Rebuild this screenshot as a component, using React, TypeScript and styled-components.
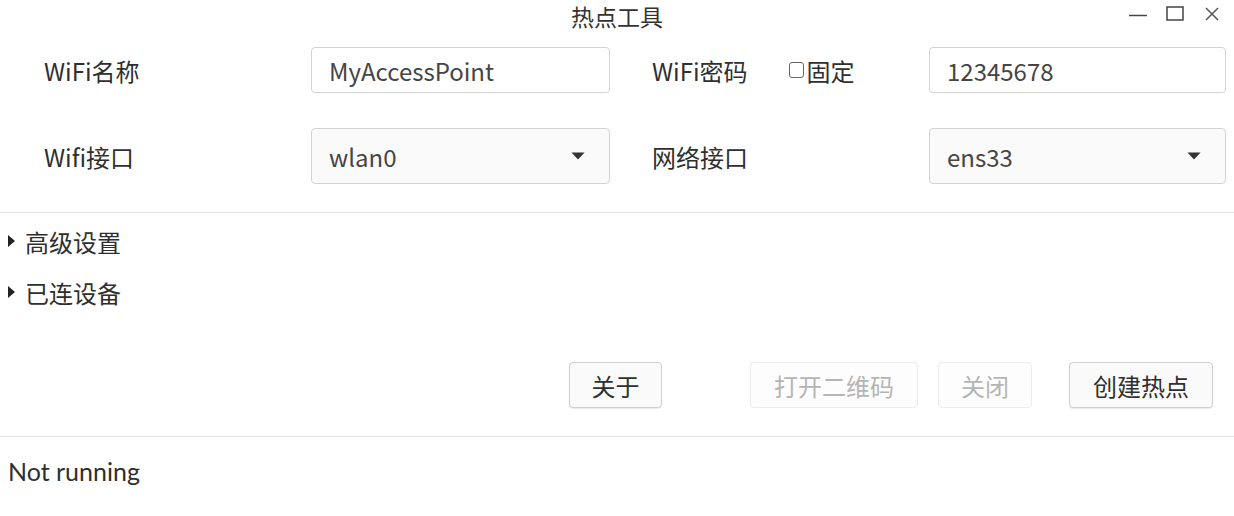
import React from "react";
import styled, { createGlobalStyle } from "styled-components";

const Global = createGlobalStyle`
  html, body { margin: 0; padding: 0; background: #ffffff; }
  body { font-family: "Noto Sans CJK SC", "Noto Sans", sans-serif; color: #333333; }
`;

const Window = styled.div`
  width: 1234px;
  height: 516px;
  display: flex;
  flex-direction: column;
  background: #ffffff;
  overflow: hidden;
`;

const TitleBar = styled.div`
  height: 33px;
  display: grid;
  grid-template-columns: 1fr auto 1fr;
  align-items: start;
`;

const Title = styled.div`
  font-size: 23px;
  line-height: 33px;
  color: #333;
  grid-column: 2;
`;

const Controls = styled.div`
  grid-column: 3;
  justify-self: end;
  display: flex;
  align-items: center;
  padding-right: 4px;
`;

const CtrlBtn = styled.div`
  width: 37px;
  height: 28px;
  display: flex;
  align-items: center;
  justify-content: center;
`;

const Form = styled.div`
  display: grid;
  grid-template-columns: 267px 299px 319px 297px;
  grid-template-rows: 46px 56px;
  row-gap: 35px;
  padding: 14px 0 28px 44px;
  align-items: center;
`;

const Label = styled.div<{ $indent?: number }>`
  font-size: 24px;
  color: #2f2f2f;
  padding-left: ${(p) => p.$indent ?? 0}px;
  display: flex;
  align-items: center;
  white-space: nowrap;
`;

const TextInput = styled.div`
  height: 46px;
  box-sizing: border-box;
  border: 1px solid #d3d3d3;
  border-radius: 4px;
  background: #fff;
  display: flex;
  align-items: center;
  padding-left: 17px;
  font-size: 24px;
  color: #454545;
`;

const Combo = styled(TextInput)`
  height: 56px;
  background: #fafafa;
  justify-content: space-between;
  padding-right: 24px;
`;

const Check = styled.span`
  display: inline-block;
  width: 13px;
  height: 14px;
  border: 1px solid #666;
  border-radius: 3px;
  margin-left: 41px;
  margin-right: 3px;
`;

const Divider = styled.div`
  height: 1px;
  background: #e4e4e4;
`;

const Sections = styled.div`
  display: flex;
  flex-direction: column;
  padding: 13px 0 0 8px;
  gap: 21px;
`;

const Expander = styled.div`
  display: flex;
  align-items: center;
  font-size: 24px;
  height: 30px;
  color: #2f2f2f;
`;

const Arrow = styled.span`
  width: 0;
  height: 0;
  border-top: 6px solid transparent;
  border-bottom: 6px solid transparent;
  border-left: 7px solid #222;
  margin-right: 10px;
`;

const ButtonRow = styled.div`
  display: flex;
  align-items: center;
  height: 46px;
  margin-top: 55px;
  margin-bottom: 28px;
  padding-left: 569px;
`;

const Button = styled.div<{ $disabled?: boolean; $w: number; $ml?: number }>`
  width: ${(p) => p.$w}px;
  height: 46px;
  box-sizing: border-box;
  margin-left: ${(p) => p.$ml ?? 0}px;
  border: 1px solid ${(p) => (p.$disabled ? "#ececec" : "#d0d0d0")};
  border-radius: 4px;
  background: ${(p) => (p.$disabled ? "#fdfdfd" : "#fafafa")};
  color: ${(p) => (p.$disabled ? "#b5b5b5" : "#2f2f2f")};
  font-size: 24px;
  display: flex;
  align-items: center;
  justify-content: center;
  box-shadow: ${(p) => (p.$disabled ? "none" : "0 1px 1px rgba(0,0,0,0.08)")};
`;

const Status = styled.div`
  font-family: Lato, "Noto Sans", sans-serif;
  font-size: 25px;
  color: #2f2f2f;
  padding: 19px 0 0 8px;
`;

const Caret = () => (
  <svg width="14" height="8" viewBox="0 0 14 8">
    <path d="M0.5 0.5 L13.5 0.5 L7 7.5 Z" fill="#333" />
  </svg>
);

export default function App() {
  return (
    <Window>
      <Global />
      <TitleBar>
        <Title>热点工具</Title>
        <Controls>
          <CtrlBtn>
            <svg width="20" height="20" viewBox="0 0 20 20">
              <path d="M1 11.5 H19" stroke="#444" strokeWidth="1.5" />
            </svg>
          </CtrlBtn>
          <CtrlBtn>
            <svg width="20" height="20" viewBox="0 0 20 20">
              <rect x="2" y="3" width="16" height="13" fill="none" stroke="#444" strokeWidth="1.5" />
            </svg>
          </CtrlBtn>
          <CtrlBtn>
            <svg width="20" height="20" viewBox="0 0 20 20">
              <path d="M4 4 L16 16 M16 4 L4 16" stroke="#555" strokeWidth="1.5" />
            </svg>
          </CtrlBtn>
        </Controls>
      </TitleBar>
      <Form>
        <Label>WiFi名称</Label>
        <TextInput>MyAccessPoint</TextInput>
        <Label $indent={42}>
          WiFi密码
          <Check />
          固定
        </Label>
        <TextInput>12345678</TextInput>
        <Label>Wifi接口</Label>
        <Combo>
          wlan0
          <Caret />
        </Combo>
        <Label $indent={42}>网络接口</Label>
        <Combo>
          ens33
          <Caret />
        </Combo>
      </Form>
      <Divider />
      <Sections>
        <Expander>
          <Arrow />
          高级设置
        </Expander>
        <Expander>
          <Arrow />
          已连设备
        </Expander>
      </Sections>
      <ButtonRow>
        <Button $w={93}>关于</Button>
        <Button $w={168} $ml={88} $disabled>
          打开二维码
        </Button>
        <Button $w={94} $ml={20} $disabled>
          关闭
        </Button>
        <Button $w={144} $ml={37}>
          创建热点
        </Button>
      </ButtonRow>
      <Divider />
      <Status>Not running</Status>
    </Window>
  );
}
